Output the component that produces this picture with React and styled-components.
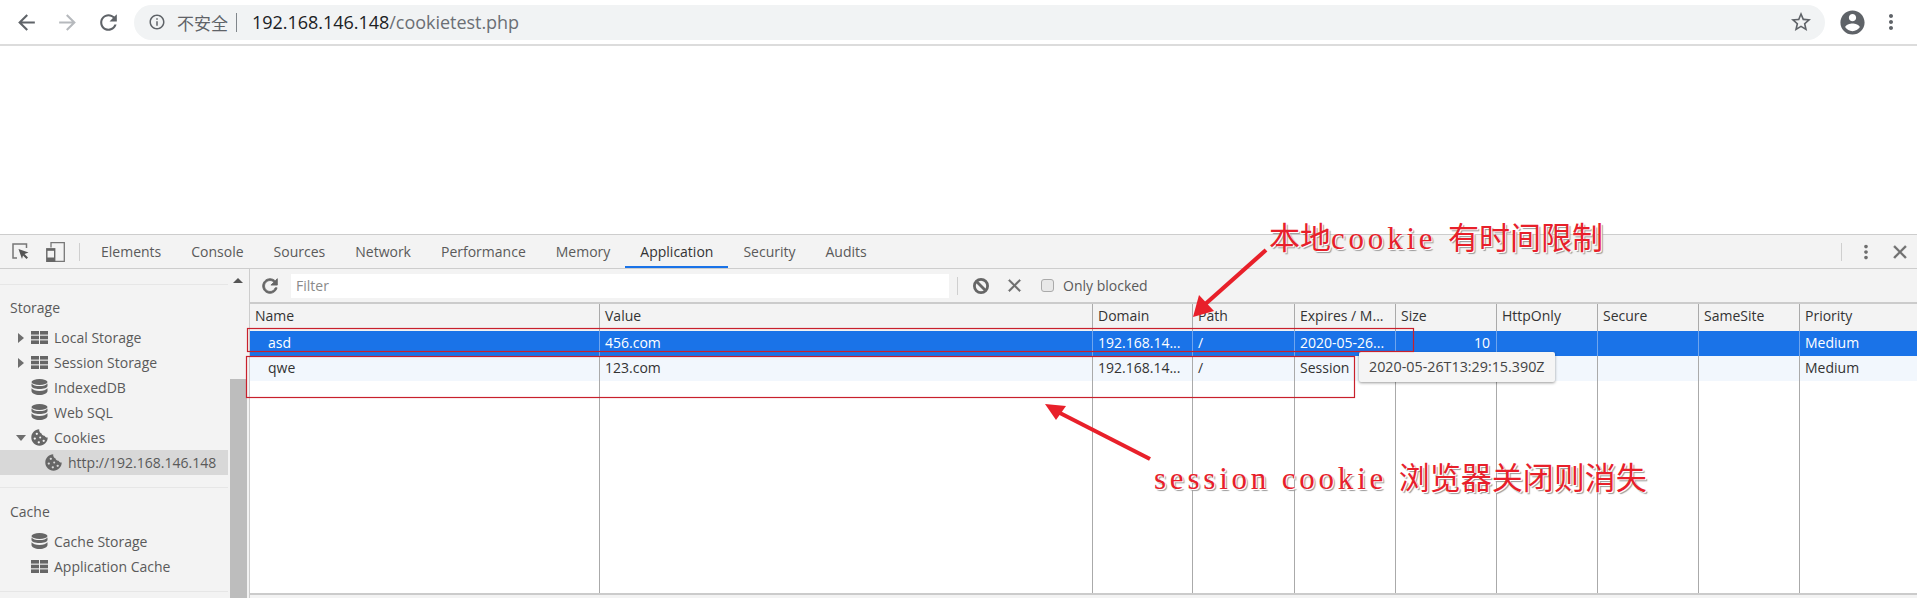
import React from "react"
import styled, { createGlobalStyle } from "styled-components"

const UI_FONT = `"Open Sans", "Noto Sans CJK SC", sans-serif`

const GlobalStyle = createGlobalStyle`
  html, body {
    margin: 0;
    padding: 0;
    background: #fff;
    overflow: hidden;
  }
  body {
    font-family: ${UI_FONT};
  }
`

const ICONS = {
  back: "M20 11H7.83l5.59-5.59L12 4l-8 8 8 8 1.41-1.41L7.83 13H20v-2z",
  forward: "M4 11h12.17l-5.59-5.59L12 4l8 8-8 8-1.41-1.41L16.17 13H4v-2z",
  reload:
    "M17.65 6.35C16.2 4.9 14.21 4 12 4c-4.42 0-7.99 3.58-7.99 8s3.57 8 7.99 8c3.73 0 6.84-2.55 7.73-6h-2.08c-.82 2.33-3.04 4-5.65 4-3.31 0-6-2.69-6-6s2.69-6 6-6c1.66 0 3.14.69 4.22 1.78L13 11h7V4l-2.35 2.35z",
  info:
    "M11 7h2v2h-2zm0 4h2v6h-2zm1-9C6.48 2 2 6.48 2 12s4.48 10 10 10 10-4.48 10-10S17.52 2 12 2zm0 18c-4.41 0-8-3.59-8-8s3.59-8 8-8 8 3.59 8 8-3.59 8-8 8z",
  star:
    "M22 9.24l-7.19-.62L12 2 9.19 8.63 2 9.24l5.46 4.73L5.82 21 12 17.27 18.18 21l-1.63-7.03L22 9.24zM12 15.4l-3.76 2.27 1-4.28-3.32-2.88 4.38-.38L12 6.1l1.71 4.04 4.38.38-3.32 2.88 1 4.28L12 15.4z",
  account:
    "M12 2C6.48 2 2 6.48 2 12s4.48 10 10 10 10-4.48 10-10S17.52 2 12 2zm0 3c1.66 0 3 1.34 3 3s-1.34 3-3 3-3-1.34-3-3 1.34-3 3-3zm0 14.2c-2.5 0-4.71-1.28-6-3.22.03-1.99 4-3.08 6-3.08 1.99 0 5.97 1.09 6 3.08-1.29 1.94-3.5 3.22-6 3.22z",
  dots:
    "M12 8c1.1 0 2-.9 2-2s-.9-2-2-2-2 .9-2 2 .9 2 2 2zm0 2c-1.1 0-2 .9-2 2s.9 2 2 2 2-.9 2-2-.9-2-2-2zm0 6c-1.1 0-2 .9-2 2s.9 2 2 2 2-.9 2-2-.9-2-2-2z",
  close:
    "M19 6.41L17.59 5 12 10.59 6.41 5 5 6.41 10.59 12 5 17.59 6.41 19 12 13.41 17.59 19 19 17.59 13.41 12z",
}

const Icon = ({ name, size = 24, color = "#5f6368", bold = 0 }) => (
  <svg
    width={size}
    height={size}
    viewBox="0 0 24 24"
    fill={color}
    stroke={bold ? color : "none"}
    strokeWidth={bold}
    style={{ display: "block", flex: "none" }}
  >
    <path d={ICONS[name]} />
  </svg>
)

const BlockIcon = () => (
  <svg width="18" height="18" viewBox="0 0 18 18" fill="none" stroke="#666" strokeWidth="2.8" style={{ display: "block", flex: "none" }}>
    <circle cx="9" cy="9" r="6.6" />
    <line x1="4.500" y1="4.500" x2="13.500" y2="13.500" />
  </svg>
)

const GridIcon = () => (
  <svg width="17" height="13" viewBox="0 0 17 13" fill="#666" style={{ display: "block", flex: "none" }}>
    <rect x="0" y="0" width="8" height="3.600" />
    <rect x="9" y="0" width="8" height="3.600" />
    <rect x="0" y="4.700" width="8" height="3.600" />
    <rect x="9" y="4.700" width="8" height="3.600" />
    <rect x="0" y="9.400" width="8" height="3.600" />
    <rect x="9" y="9.400" width="8" height="3.600" />
  </svg>
)

const DbIcon = () => (
  <svg width="17" height="17" viewBox="0 0 17 17" fill="#666" style={{ display: "block", flex: "none" }}>
    <ellipse cx="8.500" cy="3" rx="8" ry="3" />
    <path d="M.5 4.400v2.600c0 1.700 3.600 3 8 3s8-1.300 8-3V4.400C15.300 6 12.200 7 8.500 7S1.700 6 .5 4.400z" />
    <path d="M.5 9.300V12c0 2.200 3.600 4 8 4s8-1.800 8-4V9.300c-1.200 1.600-4.300 2.600-8 2.600S1.700 10.900.5 9.300z" />
  </svg>
)

const CookieIcon = ({ hole = "#f3f3f3" }) => (
  <svg width="17" height="17" viewBox="0 0 17 17" style={{ display: "block", flex: "none" }}>
    <path
      fill="#666"
      d="M8.200.3C3.800.5.300 4 .300 8.500s3.700 8.200 8.200 8.200 8.200-3.600 8.200-8.200c-1.400.2-2.600-.4-3.100-1.700-1.500.2-2.800-.7-3-2.200C9.200 4.300 7.900 2.100 8.200.3z"
    />
    <circle cx="5.800" cy="4.800" r="1.150" fill={hole} />
    <circle cx="3.800" cy="9.600" r="1.150" fill={hole} />
    <circle cx="9.200" cy="8.600" r="1" fill={hole} />
    <circle cx="7.800" cy="13.300" r="1.150" fill={hole} />
    <circle cx="12.700" cy="11.800" r="1.150" fill={hole} />
  </svg>
)

const InspectIcon = () => (
  <svg width="17" height="17" viewBox="0 0 17 17" style={{ display: "block", flex: "none" }}>
    <path d="M14.500 5V1H1v14h4" fill="none" stroke="#777" strokeWidth="1.500" />
    <path d="M6.500 6l10 3.500-4 1.500 3.500 3.500-1.500 1.500-3.500-3.500L10 16z" fill="#555" />
  </svg>
)

const DeviceIcon = () => (
  <svg width="19" height="20" viewBox="0 0 19 20" style={{ display: "block", flex: "none" }}>
    <path d="M5 5.500V.7h13.300v18.600H9" fill="none" stroke="#777" strokeWidth="1.300" />
    <rect x=".8" y="6.800" width="7.900" height="12.500" fill="none" stroke="#666" strokeWidth="1.400" />
    <rect x="1" y="15.500" width="7.500" height="3.500" fill="#666" />
    <rect x="1" y="7" width="7.500" height="1.800" fill="#666" />
  </svg>
)

const TABS = ["Elements", "Console", "Sources", "Network", "Performance", "Memory", "Application", "Security", "Audits"]

const COLUMNS = "350px 493px 100px 102px 101px 101px 101px 101px 101px 1fr"

const HEADERS = ["Name", "Value", "Domain", "Path", "Expires / M...", "Size", "HttpOnly", "Secure", "SameSite", "Priority"]

const COOKIES = [
  { values: ["asd", "456.com", "192.168.14...", "/", "2020-05-26...", "10", "", "", "", "Medium"], selected: true },
  { values: ["qwe", "123.com", "192.168.14...", "/", "Session", "", "", "", "", "Medium"], selected: false },
]

const App = () => {
  return (
    <Page>
      <GlobalStyle />

      <BrowserBar>
        <NavButton><Icon name="back" size={25} /></NavButton>
        <NavButton><Icon name="forward" size={25} color="#b6b9bd" /></NavButton>
        <NavButton><Icon name="reload" size={25} /></NavButton>
        <AddressBar>
          <Icon name="info" size={18} />
          <Insecure>不安全</Insecure>
          <AddressDivider />
          <Url><b>192.168.146.148</b>/cookietest.php</Url>
          <StarSlot><Icon name="star" size={24} /></StarSlot>
        </AddressBar>
        <ProfileSlot><Icon name="account" size={29} /></ProfileSlot>
        <MenuSlot><Icon name="dots" size={24} /></MenuSlot>
      </BrowserBar>

      <Viewport />

      <Devtools>
        <TabBar>
          <InspectSlot><InspectIcon /></InspectSlot>
          <DeviceSlot><DeviceIcon /></DeviceSlot>
          <BarDivider />
          <TabList>
            {TABS.map(tab => (
              <Tab key={tab} $active={tab === "Application"}>{tab}</Tab>
            ))}
          </TabList>
          <TabBarEnd>
            <EndDivider />
            <EndButton><Icon name="dots" size={22} color="#6e6e6e" /></EndButton>
            <EndButton><Icon name="close" size={22} color="#6e6e6e" bold={0.6} /></EndButton>
          </TabBarEnd>
        </TabBar>

        <Body>
          <Sidebar>
            <SidebarTree>
              <TopStrip><UpArrow /></TopStrip>
              <SectionTitle $top={11} $gap={5}>Storage</SectionTitle>
              <TreeRow><RightArrow /><GridIcon /><TreeLabel>Local Storage</TreeLabel></TreeRow>
              <TreeRow><RightArrow /><GridIcon /><TreeLabel>Session Storage</TreeLabel></TreeRow>
              <TreeRow><ArrowGap /><DbIcon /><TreeLabel>IndexedDB</TreeLabel></TreeRow>
              <TreeRow><ArrowGap /><DbIcon /><TreeLabel>Web SQL</TreeLabel></TreeRow>
              <TreeRow><DownArrow /><CookieIcon /><TreeLabel>Cookies</TreeLabel></TreeRow>
              <TreeRow $selected $nested><CookieIcon hole="#d8d8d8" /><TreeLabel>http://192.168.146.148</TreeLabel></TreeRow>
              <SectionBreak />
              <SectionTitle $top={12} $gap={5}>Cache</SectionTitle>
              <TreeRow><ArrowGap /><DbIcon /><TreeLabel>Cache Storage</TreeLabel></TreeRow>
              <TreeRow><ArrowGap /><GridIcon /><TreeLabel>Application Cache</TreeLabel></TreeRow>
              <SectionBreak />
            </SidebarTree>
            <ScrollTrack><ScrollThumb /></ScrollTrack>
          </Sidebar>

          <Main>
            <FilterBar>
              <FilterReload><Icon name="reload" size={22} color="#666" bold={0.9} /></FilterReload>
              <FilterInput>Filter</FilterInput>
              <BarDivider />
              <BlockButton><BlockIcon /></BlockButton>
              <ClearButton><Icon name="close" size={21} color="#6e6e6e" bold={0.6} /></ClearButton>
              <Checkbox />
              <CheckLabel>Only blocked</CheckLabel>
            </FilterBar>

            <Table>
              <HeaderRow>
                {HEADERS.map(header => (
                  <Cell key={header}>{header}</Cell>
                ))}
              </HeaderRow>
              {COOKIES.map(cookie => (
                <Row key={cookie.values[0]} $selected={cookie.selected}>
                  {cookie.values.map((value, i) => (
                    <Cell key={i} $indent={i === 0} $right={i === 5} $selected={cookie.selected}>{value}</Cell>
                  ))}
                </Row>
              ))}
              <FillerRow>
                {HEADERS.map(header => (
                  <Cell key={header} />
                ))}
              </FillerRow>
            </Table>
          </Main>
        </Body>
      </Devtools>

      <Tooltip>2020-05-26T13:29:15.390Z</Tooltip>

      <AnnotationLayer viewBox="0 0 1917 598">
        <rect x="247.500" y="328.500" width="1166" height="23" fill="none" stroke="#c8202c" strokeWidth="1.200" />
        <rect x="246.500" y="356.500" width="1108" height="41" fill="none" stroke="#c8202c" strokeWidth="1.200" />
        <line x1="1266" y1="250" x2="1202" y2="307" stroke="#e8202a" strokeWidth="4.200" />
        <polygon points="1193,317 1199,295 1214,311" fill="#e8202a" />
        <line x1="1150" y1="459" x2="1056" y2="411" stroke="#e8202a" strokeWidth="4.200" />
        <polygon points="1045,404 1066,406 1056,420" fill="#e8202a" />
      </AnnotationLayer>

      <Note $left={1269} $top={218}>
        本地<Latin>cookie </Latin>有时间限制
      </Note>
      <Note $left={1154} $top={458}>
        <Latin>session cookie </Latin>浏览器关闭则消失
      </Note>
    </Page>
  )
}

export default App

const Page = styled.div`
  position: relative;
  width: 1917px;
  height: 598px;
  display: flex;
  flex-direction: column;
  overflow: hidden;
  background: #fff;
`

const BrowserBar = styled.div`
  height: 44px;
  flex: none;
  display: flex;
  align-items: center;
  padding-left: 6px;
  border-bottom: 2px solid #dcdcdc;
`

const NavButton = styled.div`
  width: 41px;
  display: flex;
  justify-content: center;
`

const AddressBar = styled.div`
  flex: none;
  width: 1691px;
  height: 35px;
  margin-left: 5px;
  padding-left: 14px;
  box-sizing: border-box;
  display: flex;
  align-items: center;
  background: #f1f3f4;
  border-radius: 18px;
`

const Insecure = styled.span`
  margin-left: 11px;
  font-size: 17px;
  color: #5f6368;
`

const AddressDivider = styled.span`
  width: 1px;
  height: 19px;
  margin: 0 15px 0 8px;
  background: #80868b;
`

const Url = styled.span`
  font-size: 18px;
  color: #6b6f74;
  letter-spacing: -0.03px;

  b {
    font-weight: 400;
    color: #202124;
  }
`

const StarSlot = styled.div`
  margin-left: auto;
  margin-right: 12px;
`

const ProfileSlot = styled.div`
  margin-left: 13px;
`

const MenuSlot = styled.div`
  margin-left: 12px;
`

const Viewport = styled.div`
  flex: 1;
  background: #fff;
`

const Devtools = styled.div`
  height: 364px;
  flex: none;
  display: flex;
  flex-direction: column;
  background: #f3f3f3;
  border-top: 1px solid #cdcdcd;
  box-sizing: border-box;
  color: #5a5a5a;
  font-size: 14px;
`

const TabBar = styled.div`
  height: 33px;
  flex: none;
  display: flex;
  align-items: center;
  border-bottom: 1px solid #cdcdcd;
`

const TabList = styled.div`
  align-self: stretch;
  display: flex;
  margin-left: 6px;
`

const InspectSlot = styled.div`
  margin-left: 12px;
`

const DeviceSlot = styled.div`
  margin-left: 17px;
  margin-right: 14px;
`

const BarDivider = styled.span`
  width: 1px;
  height: 18px;
  flex: none;
  background: #cfcfcf;
`

const EndDivider = styled(BarDivider)`
  margin-right: 7px;
`

const Tab = styled.div`
  display: flex;
  align-items: center;
  padding: 0 15px;
  color: ${props => (props.$active ? "#333" : "#5a5a5a")};
  box-shadow: ${props => (props.$active ? "inset 0 -2px 0 #1a73e8" : "none")};
`

const TabBarEnd = styled.div`
  margin-left: auto;
  display: flex;
  align-items: center;
`

const EndButton = styled.div`
  width: 34px;
  display: flex;
  justify-content: center;
`

const Body = styled.div`
  flex: 1;
  min-height: 0;
  display: flex;
`

const Sidebar = styled.div`
  width: 250px;
  flex: none;
  display: flex;
  border-right: 1px solid #cdcdcd;
  box-sizing: border-box;
  overflow: hidden;
`

const SidebarTree = styled.div`
  width: 228px;
  margin-right: 2px;
  flex: none;
`

const TopStrip = styled.div`
  height: 15px;
  border-bottom: 1px solid #e6e6e6;
  position: relative;
`

const UpArrow = styled.span`
  position: absolute;
  left: 233px;
  top: 9px;
  border-left: 5px solid transparent;
  border-right: 5px solid transparent;
  border-bottom: 5px solid #555;
`

const SectionTitle = styled.div`
  height: 24px;
  line-height: 24px;
  margin-top: ${props => props.$top}px;
  margin-bottom: ${props => props.$gap}px;
  padding-left: 10px;
`

const TreeRow = styled.div`
  height: 25px;
  display: flex;
  align-items: center;
  padding-left: ${props => (props.$nested ? 45 : 15)}px;
  background: ${props => (props.$selected ? "#d8d8d8" : "transparent")};
`

const TreeLabel = styled.span`
  margin-left: 6px;
  white-space: nowrap;
`

const ArrowGap = styled.span`
  width: 16px;
  flex: none;
`

const RightArrow = styled.span`
  width: 0;
  flex: none;
  margin-left: 3px;
  margin-right: 7px;
  border-top: 5px solid transparent;
  border-bottom: 5px solid transparent;
  border-left: 6px solid #6e6e6e;
`

const DownArrow = styled.span`
  width: 0;
  flex: none;
  margin-left: 1px;
  margin-right: 5px;
  border-left: 5px solid transparent;
  border-right: 5px solid transparent;
  border-top: 6px solid #6e6e6e;
`

const SectionBreak = styled.div`
  height: 12px;
  border-bottom: 1px solid #e6e6e6;
`

const ScrollTrack = styled.div`
  width: 17px;
  flex: none;
  padding-top: 110px;
  box-sizing: border-box;
`

const ScrollThumb = styled.div`
  height: 100%;
  background: #bdbdbd;
`

const Main = styled.div`
  flex: 1;
  min-width: 0;
  display: flex;
  flex-direction: column;
`

const FilterBar = styled.div`
  height: 33px;
  flex: none;
  display: flex;
  align-items: center;
`

const FilterReload = styled.div`
  margin-left: 9px;
  margin-right: 10px;
`

const FilterInput = styled.div`
  width: 658px;
  height: 24px;
  margin-right: 8px;
  padding-left: 5px;
  box-sizing: border-box;
  line-height: 24px;
  background: #fff;
  color: #8a8a8a;
`

const BlockButton = styled.div`
  margin-left: 14px;
`

const ClearButton = styled.div`
  margin-left: 14px;
`

const Checkbox = styled.span`
  width: 13px;
  height: 13px;
  margin-left: 16px;
  box-sizing: border-box;
  background: #e8e8e8;
  border: 1px solid #aaa;
  border-radius: 3px;
`

const CheckLabel = styled.span`
  margin-left: 9px;
`

const Table = styled.div`
  flex: 1;
  min-height: 0;
  display: flex;
  flex-direction: column;
  margin-bottom: 3px;
  background: #fff;
  border-top: 2px solid #cbcbcb;
  border-bottom: 2px solid #cbcbcb;
`

const gridRow = `
  display: grid;
  grid-template-columns: ${COLUMNS};
`

const HeaderRow = styled.div`
  ${gridRow}
  height: 27px;
  flex: none;
  background: #f3f3f3;
  color: #333;
`

const Row = styled.div`
  ${gridRow}
  height: 25px;
  flex: none;
  background: ${props => (props.$selected ? "#1a73e8" : "#f2f7fd")};
  color: ${props => (props.$selected ? "#fff" : "#333")};
`

const FillerRow = styled.div`
  ${gridRow}
  flex: 1;
`

const Cell = styled.div`
  padding: 0 6px;
  padding-left: ${props => (props.$indent ? 18 : 5)}px;
  line-height: 23px;
  text-align: ${props => (props.$right ? "right" : "left")};
  white-space: nowrap;
  overflow: hidden;
  border-right: 1px solid ${props => (props.$selected ? "#6fa5ee" : "#aaa")};

  &:last-child {
    border-right: 0;
  }
`

const Tooltip = styled.div`
  position: absolute;
  left: 1359px;
  top: 352px;
  height: 30px;
  padding: 0 10px;
  line-height: 30px;
  background: #f5f5f5;
  color: #444;
  font-size: 14.3px;
  border-radius: 2px;
  box-shadow: 0 1px 3px rgba(0, 0, 0, 0.4);
`

const AnnotationLayer = styled.svg`
  position: absolute;
  left: 0;
  top: 0;
  width: 1917px;
  height: 598px;
  pointer-events: none;
`

const Note = styled.div`
  position: absolute;
  left: ${props => props.$left}px;
  top: ${props => props.$top}px;
  font-family: "Noto Sans CJK SC", sans-serif;
  font-size: 31px;
  line-height: 36px;
  white-space: pre;
  color: #e8202a;
  text-shadow: 1px 1px 0 #fff, 2px 2px 1px #999;
`

const Latin = styled.span`
  font-family: "Liberation Serif", serif;
  font-size: 31px;
  letter-spacing: 3.8px;
`
